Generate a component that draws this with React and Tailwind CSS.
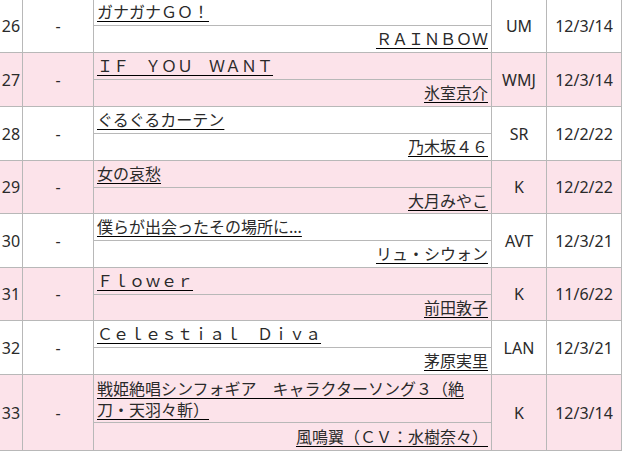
import React from 'react';

const rows = [
  { no: 26, title: 'ガナガナＧＯ！', artist: 'ＲＡＩＮＢＯＷ', label: 'UM', date: '12/3/14', h: 'h-[26px]' },
  { no: 27, title: 'ＩＦ　ＹＯＵ　ＷＡＮＴ', artist: '氷室京介', label: 'WMJ', date: '12/3/14', h: 'h-[26px]' },
  { no: 28, title: 'ぐるぐるカーテン', artist: '乃木坂４６', label: 'SR', date: '12/2/22', h: 'h-[26px]' },
  { no: 29, title: '女の哀愁', artist: '大月みやこ', label: 'K', date: '12/2/22', h: 'h-[25px]' },
  { no: 30, title: '僕らが出会ったその場所に...', artist: 'リュ・シウォン', label: 'AVT', date: '12/3/21', h: 'h-[26px]' },
  { no: 31, title: 'Ｆｌｏｗｅｒ', artist: '前田敦子', label: 'K', date: '11/6/22', h: 'h-[25px]' },
  { no: 32, title: 'Ｃｅｌｅｓｔｉａｌ　Ｄｉｖａ', artist: '茅原実里', label: 'LAN', date: '12/3/21', h: 'h-[26px]' },
  {
    no: 33,
    title: '戦姫絶唱シンフォギア　キャラクターソング３（絶刀・天羽々斬）',
    artist: '風鳴翼（ＣＶ：水樹奈々）',
    label: 'K',
    date: '12/3/14',
    h: 'h-[27px]',
    tall: true,
  },
];

function Row({ row, pink }) {
  return (
    <div className={`flex border-b border-[#b8b8b8] ${pink ? 'bg-[#fce3ea]' : 'bg-white'}`}>
      <div className="flex w-[23px] shrink-0 items-center justify-center border-r border-[#b8b8b8]">{row.no}</div>
      <div className="flex w-[71px] shrink-0 items-center justify-center border-r border-[#b8b8b8]">-</div>
      <div className="flex w-[398px] shrink-0 flex-col border-r border-[#b8b8b8]">
        <div
          className={`flex border-b border-[#b8b8b8] px-[3px] ${
            row.tall ? 'h-[48px] items-start pt-[4px] leading-[21px]' : 'h-[27px] items-center leading-[20px]'
          }`}
        >
          <a className="underline decoration-black underline-offset-[3px]">{row.title}</a>
        </div>
        <div className={`flex ${row.h} items-center justify-end px-[3px]`}>
          <a className="underline decoration-black underline-offset-[3px]">{row.artist}</a>
        </div>
      </div>
      <div className="flex w-[55px] shrink-0 items-center justify-center border-r border-[#b8b8b8]">{row.label}</div>
      <div className="flex w-[75px] shrink-0 items-center justify-center border-r border-[#b8b8b8]">{row.date}</div>
    </div>
  );
}

export default function App() {
  return (
    <div className="h-[452px] w-[623px] overflow-hidden bg-white">
      <div className="-mt-px w-[622px] font-['Noto_Sans','Noto_Sans_CJK_JP',sans-serif] text-[16px] text-[#2a2a2a]">
        {rows.map((row, i) => (
          <Row key={row.no} row={row} pink={i % 2 === 1} />
        ))}
      </div>
    </div>
  );
}
